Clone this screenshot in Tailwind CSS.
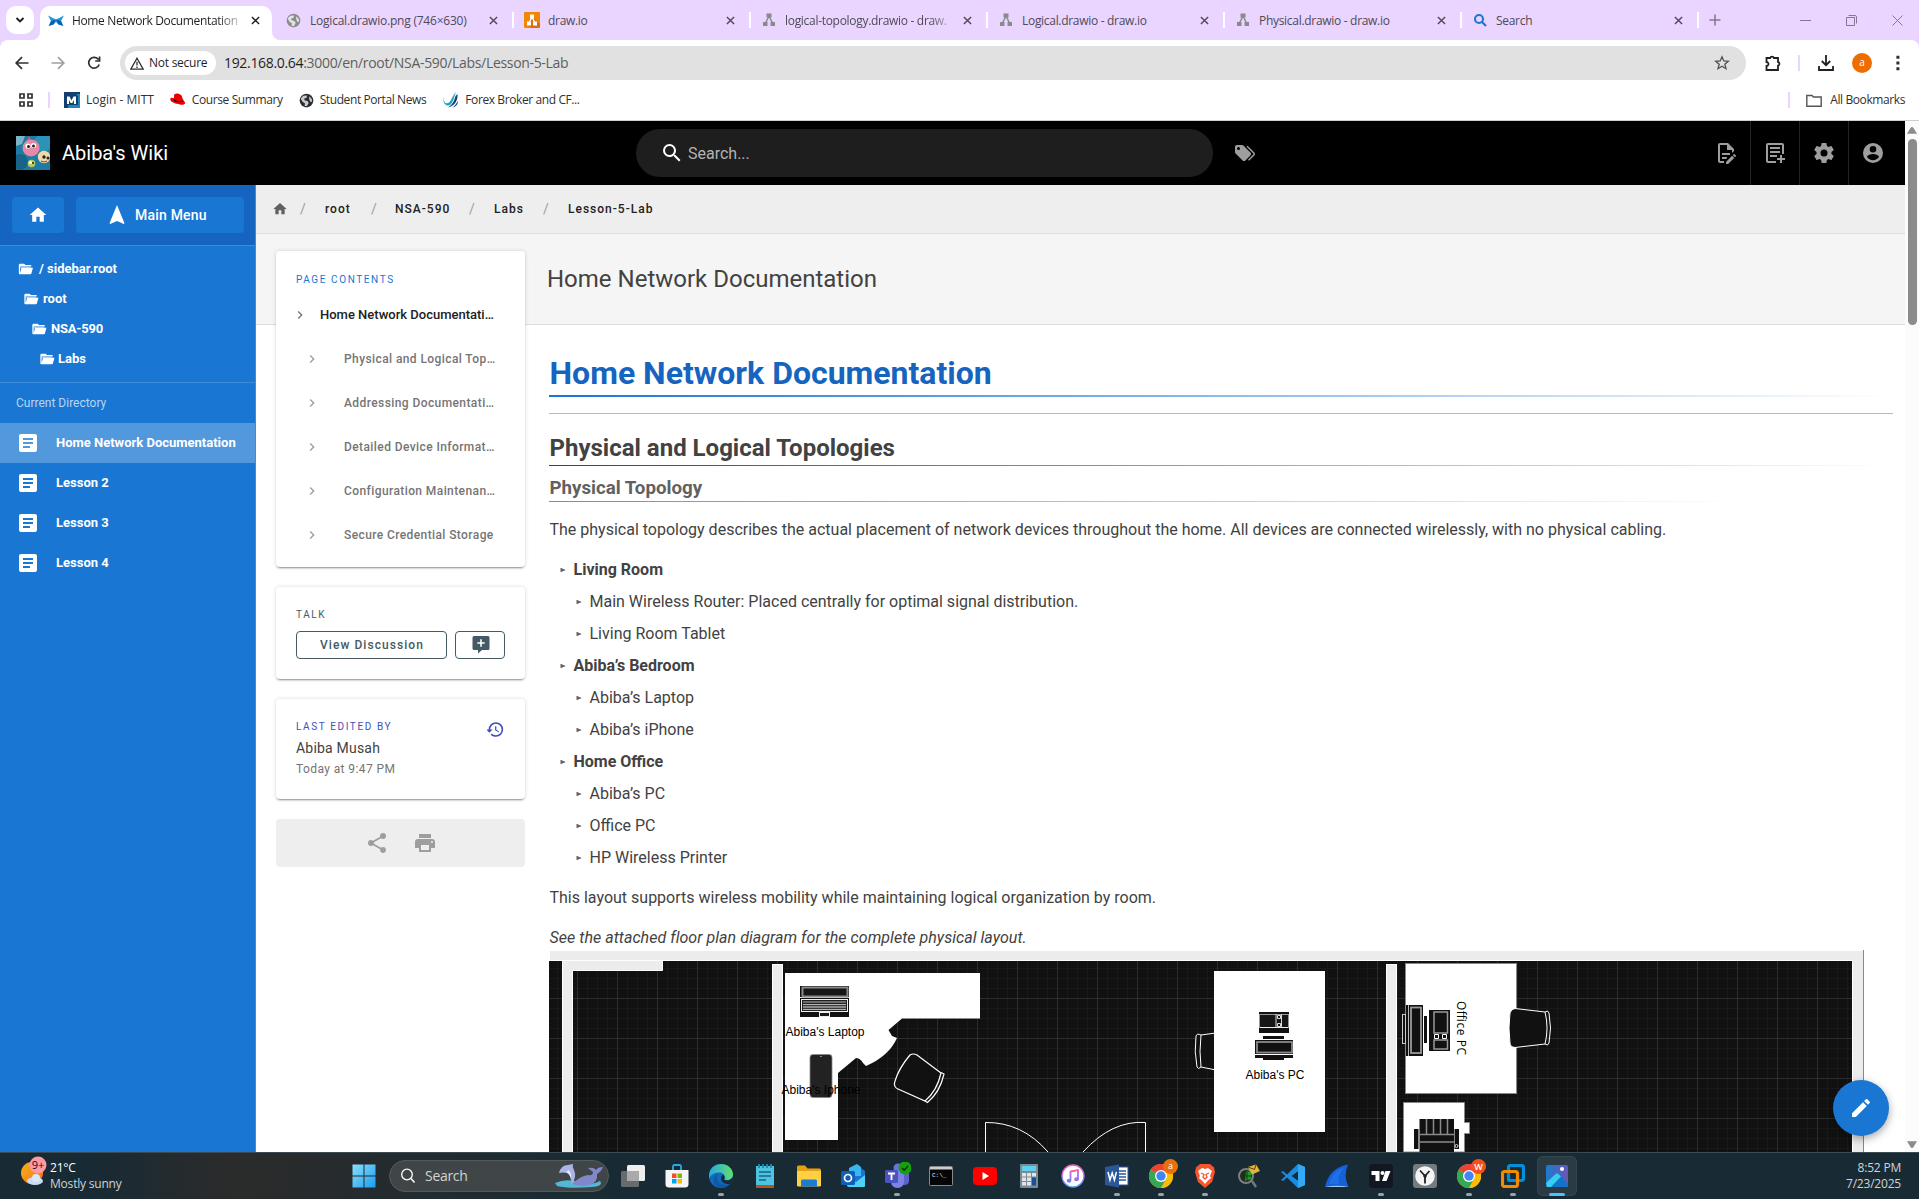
<!DOCTYPE html>
<html lang="en">
<head>
<meta charset="utf-8">
<title>Home Network Documentation | Abiba's Wiki</title>
<script src="https://cdn.jsdelivr.net/npm/@tailwindcss/browser@4"></script>
</head>
<body class="w-[1919px] h-[1199px] overflow-hidden bg-white font-['Roboto',sans-serif] flex flex-col">

<svg class="hidden">
  <symbol id="x" viewBox="0 0 10 10"><path d="M1 1L9 9M9 1L1 9" stroke="currentColor" stroke-width="1.6" fill="none"/></symbol>
  <symbol id="globe" viewBox="0 0 24 24"><circle cx="12" cy="12" r="11" fill="currentColor"/><path d="M3 8.500L7 4.500L13 4L12 7.500L8 9L9 11.500L14 13L15.500 16L12.500 21L9 20.500L9.500 16.500L6 14.500L3.500 10.500ZM16 5L20.500 9.500L21 14L18 14L16.500 10.500Z" fill="#fff" fill-opacity=".75"/></symbol>
  <symbol id="drawio" viewBox="0 0 16 16"><path d="M8 4L4 12M8 4L12 12" stroke="currentColor" stroke-width="1.5"/><path d="M5.500 1.500h5v4h-5zM2 10h4.500v4H2zM9.500 10H14v4H9.500z" fill="currentColor"/></symbol>
  <symbol id="folder-open" viewBox="0 0 24 24"><path fill="currentColor" fill-opacity=".55" d="M4 8h16v3H4z"/><path fill="currentColor" d="M19,20H4C2.890,20 2,19.100 2,18V6C2,4.890 2.890,4 4,4H10L12,6H19A2,2 0 0,1 21,8H4V18L6.140,10H23.210L20.930,18.500C20.700,19.370 19.920,20 19,20Z"/></symbol>
  <symbol id="doc" viewBox="0 0 24 24"><path fill="currentColor" d="M14,17H7V15H14M17,13H7V11H17M17,9H7V7H17M19,3H5C3.890,3 3,3.890 3,5V19A2,2 0 0,0 5,21H19A2,2 0 0,0 21,19V5C21,3.890 20.100,3 19,3Z"/></symbol>
  <symbol id="chev" viewBox="0 0 24 24"><path fill="currentColor" d="M8.590,16.580L13.170,12L8.590,7.410L10,6L16,12L10,18L8.590,16.580Z"/></symbol>
  <symbol id="home" viewBox="0 0 24 24"><path fill="currentColor" d="M10,20V14H14V20H19V12H22L12,3L2,12H5V20H10Z"/></symbol>
  <symbol id="chrome" viewBox="0 0 24 24"><circle cx="12" cy="12" r="12" fill="#fbbc05"/><path d="M12 12L1.600 6A12 12 0 0 1 22.400 6Z" fill="#ea4335"/><path d="M12 0A12 12 0 0 1 22.400 6H12Z" fill="#ea4335"/><path d="M1.600 6A12 12 0 0 0 12 24L17.200 15L12 12Z" fill="#34a853"/><path d="M22.400 6A12 12 0 0 1 12 24L17.200 15A6 6 0 0 0 17 8V6Z" fill="#fbbc05"/><circle cx="12" cy="12" r="6" fill="#fff"/><circle cx="12" cy="12" r="4.700" fill="#4285f4"/></symbol>
  <symbol id="li" viewBox="0 0 6 6"><path d="M.500 .700L5.800 3L.500 5.300Z" fill="#616161"/></symbol>
</svg>

<!-- Browser tabs -->
<header class="h-[121px] shrink-0 bg-[#e9d5ff] font-['Open_Sans',sans-serif] text-xs flex flex-col">
  <div class="h-10 flex shrink-0 tracking-[-0.3px] text-[#4f4a57]">
    <div class="w-10 shrink-0 pl-1.5 pt-1.5"><div class="w-7 h-7 rounded-[10px] bg-white grid place-items-center"><svg class="w-[10px] h-[8px]" viewBox="0 0 10 8"><path d="M1.500 2L5 5.500L8.500 2" fill="none" stroke="#1f1f1f" stroke-width="1.900"/></svg></div></div>
    <div class="w-[237px] shrink-0 pt-1.5 relative">
      <div class="w-[232px] h-[34px] bg-white rounded-t-[10px] flex items-center pb-[5px] pl-2 text-[#1f1f1f]">
        <svg class="w-4 h-4 shrink-0" viewBox="0 0 16 16"><path d="M0 2.500L8 6.500L16 2.500L13 8L15.500 13L10.500 11.500L8 9L5.500 11.500L.500 13L3 8Z" fill="#1e9be0"/><path d="M3 8L8 6.500L5.500 11.500L1 12.800ZM13 8L8 6.500L10.500 11.500L15 12.800Z" fill="#0b5fb0"/></svg>
        <span class="ml-2 w-[168px] whitespace-nowrap tracking-[-0.36px] [mask-image:linear-gradient(to_right,black_145px,transparent_175px)]">Home Network Documentation</span>
        <svg class="w-[9px] h-[9px] ml-[11px]"><use href="#x"/></svg>
      </div>
      <svg class="absolute -left-2 bottom-0 w-2 h-2" viewBox="0 0 8 8"><path d="M8 0V8H0A8 8 0 0 0 8 0Z" fill="#fff"/></svg>
      <svg class="absolute left-[232px] bottom-0 w-2 h-2" viewBox="0 0 8 8"><path d="M0 0V8H8A8 8 0 0 1 0 0Z" fill="#fff"/></svg>
    </div>
    <div class="w-[237px] shrink-0 flex items-center pl-[9px]"><svg class="w-[15px] h-[15px] text-[#8c8c8c] shrink-0"><use href="#globe"/></svg><span class="ml-[9px] w-[171px] pt-px whitespace-nowrap tracking-[-0.22px]">Logical.drawio.png (746×630)</span><svg class="w-[9px] h-[9px] ml-[8px]"><use href="#x"/></svg><i class="w-[2px] h-4 bg-white ml-[14px]"></i></div>
    <div class="w-[237px] shrink-0 flex items-center pl-[10px]"><svg class="w-4 h-4 shrink-0" viewBox="0 0 16 16"><rect width="16" height="16" rx="1" fill="#f08705"/><path d="M9 5L16 12V15L15 16H7L3 13Z" fill="#df6c0c"/><path d="M8 5L5 11M8 5L11 11" stroke="#fff" stroke-width="1.400"/><path d="M6 2.500h4v4H6zM3 9.500h4v4H3zM9 9.500h4v4H9z" fill="#fff"/></svg><span class="ml-[8px] w-[170px] pt-px">draw.io</span><svg class="w-[9px] h-[9px] ml-[8px]"><use href="#x"/></svg><i class="w-[2px] h-4 bg-white ml-[14px]"></i></div>
    <div class="w-[237px] shrink-0 flex items-center pl-[10px]"><svg class="w-4 h-4 shrink-0 text-[#8a8a8a]"><use href="#drawio"/></svg><span class="ml-[8px] w-[170px] pt-px whitespace-nowrap [mask-image:linear-gradient(to_right,black_145px,transparent_172px)]">logical-topology.drawio - draw.</span><svg class="w-[9px] h-[9px] ml-[8px]"><use href="#x"/></svg><i class="w-[2px] h-4 bg-white ml-[14px]"></i></div>
    <div class="w-[237px] shrink-0 flex items-center pl-[10px]"><svg class="w-4 h-4 shrink-0 text-[#8a8a8a]"><use href="#drawio"/></svg><span class="ml-[8px] w-[170px] pt-px">Logical.drawio - draw.io</span><svg class="w-[9px] h-[9px] ml-[8px]"><use href="#x"/></svg><i class="w-[2px] h-4 bg-white ml-[14px]"></i></div>
    <div class="w-[237px] shrink-0 flex items-center pl-[10px]"><svg class="w-4 h-4 shrink-0 text-[#8a8a8a]"><use href="#drawio"/></svg><span class="ml-[8px] w-[170px] pt-px">Physical.drawio - draw.io</span><svg class="w-[9px] h-[9px] ml-[8px]"><use href="#x"/></svg><i class="w-[2px] h-4 bg-white ml-[14px]"></i></div>
    <div class="w-[237px] shrink-0 flex items-center pl-[10px]"><svg class="w-4 h-4 shrink-0" viewBox="0 0 16 16"><circle cx="7" cy="7" r="4" fill="none" stroke="#1976d2" stroke-width="2"/><path d="M10 10L14 14" stroke="#1976d2" stroke-width="2.200"/></svg><span class="ml-[8px] w-[170px] pt-px">Search</span><svg class="w-[9px] h-[9px] ml-[8px]"><use href="#x"/></svg><i class="w-[2px] h-4 bg-white ml-[14px]"></i></div>
    <svg class="w-3 h-3 mt-[14px] ml-[10px]" viewBox="0 0 12 12"><path d="M6 .500V11.500M.500 6H11.500" stroke="#85798f" stroke-width="1.600"/></svg>
    <div class="ml-auto mr-[16px] flex items-center gap-[35px]">
      <svg class="w-[11px] h-[11px]" viewBox="0 0 11 11"><path d="M0 5.500H11" stroke="#85798f"/></svg>
      <svg class="w-[11px] h-[11px]" viewBox="0 0 11 11"><path d="M.500 2.500H8.500V10.500H.500ZM2.500 .500H9A1.500 1.500 0 0 1 10.500 2V8.500" fill="none" stroke="#85798f"/></svg>
      <svg class="w-[11px] h-[11px]" viewBox="0 0 11 11"><path d="M.500 .500L10.500 10.500M10.500 .500L.500 10.500" stroke="#85798f"/></svg>
    </div>
  </div>
  <!-- Toolbar -->
  <div class="h-[46px] shrink-0 bg-white rounded-t-lg flex items-center pl-[15px]">
    <svg class="w-[14px] h-[14px]" viewBox="0 0 14 14"><path d="M13.500 7H1.500M7 1.200L1.200 7L7 12.800" fill="none" stroke="#303030" stroke-width="1.700"/></svg>
    <svg class="w-[14px] h-[14px] ml-[22px]" viewBox="0 0 14 14"><path d="M.500 7H12.500M7 1.200L12.800 7L7 12.800" fill="none" stroke="#a0a0a0" stroke-width="1.700"/></svg>
    <svg class="w-[14px] h-[14px] ml-[22px]" viewBox="0 0 14 14"><path d="M12.200 8.500A5.400 5.400 0 1 1 11.500 3.600M12.600 .500V5H8.200" fill="none" stroke="#303030" stroke-width="1.700"/></svg>
    <div class="ml-[19px] w-[1626px] h-[34px] rounded-full bg-[#e1e1e1] flex items-center pl-[5px]">
      <div class="w-[91px] h-6 rounded-full bg-white flex items-center pl-[5px] text-[#1f1f1f] font-medium tracking-[-0.25px] whitespace-nowrap">
        <svg class="w-[14px] h-[13px] mr-[5px]" viewBox="0 0 14 13"><path d="M7 1.200L13.200 12.200H.800ZM7 4.800V8.500M7 9.500V11" fill="none" stroke="#303030" stroke-width="1.300"/></svg>Not secure</div>
      <div class="ml-[8px] text-sm tracking-[-0.32px] text-[#5e5e5e]"><span class="text-[#1f1f1f]">192.168.0.64</span>:3000/en/root/NSA-590/Labs/Lesson-5-Lab</div>
      <svg class="ml-auto mr-[16px] w-4 h-4" viewBox="0 0 16 16"><path d="M8 1.800L9.800 6L14.300 6.300L10.800 9.200L12 13.700L8 11.200L4 13.700L5.200 9.200L1.700 6.300L6.200 6Z" fill="none" stroke="#505050" stroke-width="1.300"/></svg>
    </div>
    <svg class="ml-[18px] w-[18px] h-[18px]" viewBox="0 0 18 18"><path d="M2.500 4H6.200A1.900 1.900 0 0 1 9.900 4H14V8A1.900 1.900 0 0 1 14 11.700V16H2.500V12A2 2 0 0 0 2.500 8Z" fill="none" stroke="#202020" stroke-width="1.800"/></svg>
    <i class="ml-[16px] w-[2px] h-4 bg-[#e9d5ff]"></i>
    <svg class="ml-[18px] w-4 h-4" viewBox="0 0 16 16"><path d="M8 0V10M3.800 6L8 10.200L12.200 6M1 11V15H15V11" fill="none" stroke="#202020" stroke-width="1.800"/></svg>
    <div class="ml-[18px] w-5 h-5 rounded-full bg-[#ef6c00] text-white text-[10px] leading-[19px] text-center">a</div>
    <svg class="ml-[24px] w-1 h-4" viewBox="0 0 4 16"><path d="M.400 .800h3v3h-3zM.400 6.500h3v3h-3zM.400 12.200h3v3h-3z" fill="#303030"/></svg>
  </div>
  <!-- Bookmarks -->
  <div class="h-[35px] bg-white border-b border-[#cfcfcf] flex items-center pb-[6px] pl-[19px] text-[#303030] tracking-[-0.4px] whitespace-nowrap">
    <svg class="w-[14px] h-[14px]" viewBox="0 0 14 14"><path d="M1 1h4v4H1zM9 1h4v4H9zM1 9h4v4H1zM9 9h4v4H9z" fill="none" stroke="#303030" stroke-width="1.700"/></svg>
    <i class="ml-[15px] w-[2px] h-4 bg-[#e9d5ff]"></i>
    <svg class="ml-[14px] w-4 h-4" viewBox="0 0 16 16"><rect width="16" height="16" fill="#123f70"/><path d="M12 2H16V16H4V13H14V4Z" fill="#1f86bd"/><path d="M3 12V4.500H5.500L7.500 8.500L9.500 4.500H12V12H10V8L8.300 11H6.700L5 8V12Z" fill="#fff"/></svg><span class="ml-[6px] tracking-normal">Login - MITT</span>
    <svg class="ml-[16px] w-4 h-4" viewBox="0 0 16 16"><path d="M4 4C4 1.500 7 1 9 2C11 2.500 12 3.500 12.500 6.500L14 9C17 12 13 13.500 10 12.500C5 11.500 0 10 .300 7C.500 5 3 6 4 6.500Z" fill="#e00"/><path d="M3.500 6.500C5 9 10 10 12.500 8.500L12.800 9.600C10 11 5 10 3.200 8Z" fill="#111"/></svg><span class="ml-[6px]">Course Summary</span>
    <svg class="ml-[16px] w-[15px] h-[15px] text-[#2b2f33]"><use href="#globe"/></svg><span class="ml-[6px]">Student Portal News</span>
    <svg class="ml-[17px] w-4 h-4" viewBox="0 0 16 16"><path d="M1 4C0 9 2 12 5 11C8 10 9 4 13 0C11 4 11 10 7 13C3 15 -1 11 1 4Z" fill="#19a9c4"/><path d="M14.500 2C15 8 12 14 5 15.500C10 12.500 11.500 8 12.500 4ZM15 9C15 13 12 15 9.500 15.700C12 14 13 12 15 9Z" fill="#153f7a"/></svg><span class="ml-[6px]">Forex Broker and CF...</span>
    <i class="ml-auto w-[2px] h-4 bg-[#e9d5ff]"></i>
    <svg class="ml-[16px] w-4 h-[13px]" viewBox="0 0 16 13"><path d="M.800 1.500H6L7.500 3H15.200V12.200H.800Z" fill="none" stroke="#555" stroke-width="1.400"/></svg><span class="ml-[8px] mr-[14px]">All Bookmarks</span>
  </div>
</header>

<!-- Page viewport -->
<div class="h-[1031px] shrink-0 flex">
 <div class="w-[1905px] shrink-0 flex flex-col overflow-hidden">
  <nav class="h-16 shrink-0 bg-black flex items-center text-[#9e9e9e]">
    <svg class="ml-4 w-[34px] h-[34px]" viewBox="0 0 34 34"><rect width="34" height="34" fill="#1d7ba6"/><circle cx="27" cy="7" r="9" fill="#2c93b8"/><circle cx="4" cy="26" r="8" fill="#166588"/><path d="M0 0H9L6 8L0 10Z" fill="#7cb4c6"/><path d="M11 4L13 0L15 4Z" fill="#e8506a"/><circle cx="15" cy="12" r="8.500" fill="#e48aa4"/><circle cx="12" cy="10" r="2.600" fill="#fff"/><circle cx="17.500" cy="9.500" r="2.600" fill="#fff"/><circle cx="12.500" cy="10.500" r="1.500" fill="#222"/><circle cx="17.500" cy="10" r="1.500" fill="#222"/><circle cx="28" cy="21" r="6.200" fill="#f0d9a8"/><circle cx="28" cy="21" r="1.700" fill="#222"/><circle cx="32" cy="22" r="1.500" fill="#222"/><path d="M25 25Q28 27 31 25" stroke="#a33" fill="none"/><circle cx="15.500" cy="27.500" r="3.800" fill="#b6c95c"/><circle cx="14.500" cy="26.500" r="1.500" fill="#fff"/><circle cx="17" cy="27" r="1" fill="#222"/></svg>
    <span class="ml-3 w-[574px] text-xl text-white">Abiba's Wiki</span>
    <div class="w-[577px] h-12 rounded-full bg-[#1e1e1e] flex items-center pl-6">
      <svg class="w-6 h-6 text-white" viewBox="0 0 24 24"><path fill="currentColor" d="M9.500,3A6.500,6.500 0 0,1 16,9.500C16,11.110 15.410,12.590 14.440,13.730L14.710,14H15.500L20.500,19L19,20.500L14,15.500V14.710L13.730,14.440C12.590,15.410 11.110,16 9.500,16A6.500,6.500 0 0,1 3,9.500A6.500,6.500 0 0,1 9.500,3M9.500,5C7,5 5,7 5,9.500C5,12 7,14 9.500,14C12,14 14,12 14,9.500C14,7 12,5 9.500,5Z"/></svg>
      <span class="ml-1 text-base text-[#b3b3b3] pt-px">Search...</span>
    </div>
    <svg class="ml-[20px] w-6 h-6" viewBox="0 0 24 24"><path fill="currentColor" d="M5.500,9A1.500,1.500 0 0,0 7,7.500A1.500,1.500 0 0,0 5.500,6A1.500,1.500 0 0,0 4,7.500A1.500,1.500 0 0,0 5.500,9M17.410,11.580C17.770,11.940 18,12.440 18,13C18,13.550 17.780,14.050 17.410,14.410L12.410,19.410C12.050,19.770 11.550,20 11,20C10.450,20 9.950,19.780 9.580,19.410L2.590,12.420C2.220,12.050 2,11.550 2,11V6C2,4.890 2.890,4 4,4H9C9.550,4 10.050,4.220 10.410,4.580L17.410,11.580M13.540,5.710L14.540,4.710L21.410,11.580C21.780,11.940 22,12.450 22,13C22,13.550 21.780,14.050 21.420,14.410L16.040,19.790L15.040,18.790L20.750,13L13.540,5.710Z"/></svg>
    <div class="ml-auto flex h-full">
      <div class="w-12 grid place-items-center"><svg class="w-6 h-6" viewBox="0 0 24 24"><path fill="currentColor" d="M8,12H16V14H8V12M10,20H6V4H13V9H18V12.100L20,10.100V8L14,2H6A2,2 0 0,0 4,4V20A2,2 0 0,0 6,22H10V20M8,18H12.100L13,17.100V16H8V18M20.200,13C20.300,13 20.500,13.100 20.600,13.200L21.900,14.500C22.100,14.700 22.100,15.100 21.900,15.300L20.900,16.300L18.800,14.200L19.800,13.200C19.900,13.100 20,13 20.200,13M20.200,16.900L14.100,23H12V20.900L18.100,14.800L20.200,16.900Z"/></svg></div>
      <div class="w-[49px] grid place-items-center border-l border-[#242424]"><svg class="w-6 h-6" viewBox="0 0 24 24"><path fill="currentColor" d="M5 2H19A2 2 0 0 1 21 4V13H19V4H5V20H13V22H5A2 2 0 0 1 3 20V4A2 2 0 0 1 5 2ZM7 6H17V8H7ZM7 10H17V12H7ZM7 14H14V16H7ZM17 14H19V17H22V19H19V22H17V19H14V17H17Z"/></svg></div>
      <div class="w-[49px] grid place-items-center border-l border-[#242424]"><svg class="w-6 h-6" viewBox="0 0 24 24"><path fill="currentColor" d="M12,15.500A3.500,3.500 0 0,1 8.500,12A3.500,3.500 0 0,1 12,8.500A3.500,3.500 0 0,1 15.500,12A3.500,3.500 0 0,1 12,15.500M19.430,12.970C19.470,12.650 19.500,12.330 19.500,12C19.500,11.670 19.470,11.340 19.430,11L21.540,9.370C21.730,9.220 21.780,8.950 21.660,8.730L19.660,5.270C19.540,5.050 19.270,4.960 19.050,5.050L16.560,6.050C16.040,5.660 15.500,5.320 14.870,5.070L14.500,2.420C14.460,2.180 14.250,2 14,2H10C9.750,2 9.540,2.180 9.500,2.420L9.130,5.070C8.500,5.320 7.960,5.660 7.440,6.050L4.950,5.050C4.730,4.960 4.460,5.050 4.340,5.270L2.340,8.730C2.210,8.950 2.270,9.220 2.460,9.370L4.570,11C4.530,11.340 4.500,11.670 4.500,12C4.500,12.330 4.530,12.650 4.570,12.970L2.460,14.630C2.270,14.780 2.210,15.050 2.340,15.270L4.340,18.730C4.460,18.950 4.730,19.030 4.950,18.950L7.440,17.940C7.960,18.340 8.500,18.680 9.130,18.930L9.500,21.580C9.540,21.820 9.750,22 10,22H14C14.250,22 14.460,21.820 14.500,21.580L14.870,18.930C15.500,18.670 16.040,18.340 16.560,17.940L19.050,18.950C19.270,19.030 19.540,18.950 19.660,18.730L21.660,15.270C21.780,15.050 21.730,14.780 21.540,14.630L19.430,12.970Z"/></svg></div>
      <div class="w-[57px] pr-2 grid place-items-center border-l border-[#242424]"><svg class="w-6 h-6" viewBox="0 0 24 24"><path fill="currentColor" fill-rule="evenodd" d="M12 2A10 10 0 1 0 12 22A10 10 0 1 0 12 2ZM12 5A3.300 3.300 0 1 1 12 11.600A3.300 3.300 0 1 1 12 5ZM12 19.200C9.500 19.200 7.290 17.920 6 16C6.030 14 10 12.900 12 12.900C14 12.900 17.970 14 18 16C16.710 17.920 14.500 19.200 12 19.200Z"/></svg></div>
    </div>
  </nav>

  <div class="flex flex-1 min-h-0">
   <!-- Sidebar -->
   <aside class="w-64 shrink-0 bg-[#1976d2] text-white flex flex-col border-r border-[#3d8bd9]">
    <div class="h-[61px] shrink-0 bg-[#1565c0] border-b border-[#3d8bd9] pt-3 pl-3 flex">
      <div class="w-[52px] h-9 rounded bg-[#1976d2] grid place-items-center"><svg class="w-5 h-5"><use href="#home"/></svg></div>
      <div class="ml-3 w-[168px] h-9 rounded bg-[#1976d2] flex items-center pb-px pl-[29px] text-sm font-medium tracking-[0.2px] whitespace-nowrap"><svg class="w-6 h-6 mr-[6px]" viewBox="0 0 24 24"><path fill="currentColor" d="M12,2L4.500,20.290L5.210,21L12,18L18.790,21L19.500,20.290L12,2Z"/></svg>Main Menu</div>
    </div>
    <div class="h-[137px] shrink-0 border-b border-[#3d8bd9] pt-[8px] text-[13px] font-bold flex flex-col">
      <div class="h-[30px] flex items-center pl-[17px] gap-[5px]"><svg class="w-[17px] h-4"><use href="#folder-open"/></svg>/ sidebar.root</div>
      <div class="h-[30px] flex items-center pl-[23px] gap-[4px]"><svg class="w-4 h-4"><use href="#folder-open"/></svg>root</div>
      <div class="h-[30px] flex items-center pl-[31px] gap-[4px] tracking-[-0.2px]"><svg class="w-4 h-4"><use href="#folder-open"/></svg>NSA-590</div>
      <div class="h-[30px] flex items-center pl-[39px] gap-[3px]"><svg class="w-4 h-4"><use href="#folder-open"/></svg>Labs</div>
    </div>
    <div class="h-10 flex items-center pl-4 text-xs text-white/70">Current Directory</div>
    <div class="text-[13px] font-bold flex flex-col">
      <div class="h-10 flex items-center pl-4 bg-white/25"><svg class="w-6 h-6 mr-4"><use href="#doc"/></svg>Home Network Documentation</div>
      <div class="h-10 flex items-center pl-4"><svg class="w-6 h-6 mr-4"><use href="#doc"/></svg>Lesson 2</div>
      <div class="h-10 flex items-center pl-4"><svg class="w-6 h-6 mr-4"><use href="#doc"/></svg>Lesson 3</div>
      <div class="h-10 flex items-center pl-4"><svg class="w-6 h-6 mr-4"><use href="#doc"/></svg>Lesson 4</div>
    </div>
   </aside>

   <main class="flex-1 min-w-0 flex flex-col">
    <div class="h-[49px] shrink-0 bg-[#eee] border-b border-[#dedede] flex items-center pl-[16px] text-xs font-medium tracking-[1px] text-[#212121]">
      <svg class="w-[16px] h-[16px] text-[#616161]"><use href="#home"/></svg>
      <span class="w-[22px] ml-[12px] font-normal text-[14px] text-[#9e9e9e]">/</span><span class="ml-[3px] w-[45px]">root</span>
      <span class="w-[22px] ml-px font-normal text-[14px] text-[#9e9e9e]">/</span><span class="ml-[2px] w-[74px]">NSA-590</span>
      <span class="w-[22px] font-normal text-[14px] text-[#9e9e9e]">/</span><span class="ml-[3px] w-[49px]">Labs</span>
      <span class="w-[22px] font-normal text-[14px] text-[#9e9e9e]">/</span><span class="ml-[3px]">Lesson-5-Lab</span>
    </div>
    <div class="h-[91px] shrink-0 bg-[#f5f5f5] border-b border-[#dedede] flex items-center pl-[291px] text-2xl text-[#424242]">Home Network Documentation</div>
    <div class="flex flex-1 min-h-0">
      <!-- Page info column -->
      <div class="w-[293px] shrink-0 pl-5 -mt-[74px] flex flex-col relative">
        <section class="w-[249px] h-[316px] rounded bg-white shadow-[0_2px_2px_-1px_rgba(0,0,0,0.4),0_0_4px_rgba(0,0,0,0.15)] pl-5 pt-[23px] text-[#757575]">
          <h4 class="text-[10px] leading-3 tracking-[1.6px] text-[#1976d2]">PAGE CONTENTS</h4>
          <div class="h-11 mt-[7px] -ml-[4px] flex items-center text-[13px] font-medium text-[#212121]"><svg class="w-4 h-4 mr-[12px] text-[#757575]"><use href="#chev"/></svg>Home Network Documentati…</div>
          <div class="h-11 ml-2 flex items-center text-xs font-medium tracking-[0.41px]"><svg class="w-4 h-4 mr-6 text-[#9e9e9e]"><use href="#chev"/></svg>Physical and Logical Top…</div>
          <div class="h-11 ml-2 flex items-center text-xs font-medium tracking-[0.41px]"><svg class="w-4 h-4 mr-6 text-[#9e9e9e]"><use href="#chev"/></svg>Addressing Documentati…</div>
          <div class="h-11 ml-2 flex items-center text-xs font-medium tracking-[0.41px]"><svg class="w-4 h-4 mr-6 text-[#9e9e9e]"><use href="#chev"/></svg>Detailed Device Informat…</div>
          <div class="h-11 ml-2 flex items-center text-xs font-medium tracking-[0.41px]"><svg class="w-4 h-4 mr-6 text-[#9e9e9e]"><use href="#chev"/></svg>Configuration Maintenan…</div>
          <div class="h-11 ml-2 flex items-center text-xs font-medium tracking-[0.4px]"><svg class="w-4 h-4 mr-6 text-[#9e9e9e]"><use href="#chev"/></svg>Secure Credential Storage</div>
        </section>
        <section class="mt-5 w-[249px] h-[92px] rounded bg-white shadow-[0_2px_2px_-1px_rgba(0,0,0,0.4),0_0_4px_rgba(0,0,0,0.15)] px-5 pt-[22px] text-[#455a64]">
          <h4 class="text-[10px] leading-3 tracking-[1.6px]">TALK</h4>
          <div class="mt-[10px] flex gap-2">
            <div class="w-[151px] h-7 rounded border border-[#455a64] grid place-items-center pl-px text-xs font-medium tracking-[1.06px]">View Discussion</div>
            <div class="w-[50px] h-7 rounded border border-[#455a64] grid place-items-center pl-px"><svg class="w-5 h-[18px]" viewBox="0 0 20 18"><path fill="#455a64" fill-rule="evenodd" d="M3 0H17A1.500 1.500 0 0 1 18.500 1.500V12.500A1.500 1.500 0 0 1 17 14H11L7 17.500V14H3A1.500 1.500 0 0 1 1.500 12.500V1.500A1.500 1.500 0 0 1 3 0ZM9.200 3.300V6.200H6.300V7.800H9.200V10.700H10.800V7.800H13.700V6.200H10.800V3.300Z"/></svg></div>
          </div>
        </section>
        <section class="mt-5 w-[249px] h-[100px] rounded bg-white shadow-[0_2px_2px_-1px_rgba(0,0,0,0.4),0_0_4px_rgba(0,0,0,0.15)] pl-5 pr-[21px] pt-[22px] flex justify-between">
          <div>
            <h4 class="text-[10px] leading-3 tracking-[1.6px] text-[#3f51b5]">LAST EDITED BY</h4>
            <p class="mt-[6px] text-sm leading-[18px] tracking-[0.2px] text-[#424242]">Abiba Musah</p>
            <p class="mt-[4px] text-xs leading-4 tracking-[0.4px] text-[#757575]">Today at 9:47 PM</p>
          </div>
          <svg class="w-[17px] h-[17px]" viewBox="2 2 21 20"><path fill="#3f51b5" d="M13.500,8H12V13L16.280,15.540L17,14.330L13.500,12.250V8M13,3A9,9 0 0,0 4,12H1L4.960,16.030L9,12H6A7,7 0 0,1 13,5A7,7 0 0,1 20,12A7,7 0 0,1 13,19C11.070,19 9.320,18.210 8.060,16.940L6.640,18.360C8.270,20 10.500,21 13,21A9,9 0 0,0 22,12A9,9 0 0,0 13,3"/></svg>
        </section>
        <section class="mt-5 w-[249px] h-12 rounded bg-[#eee] flex items-center justify-center gap-6 text-[#9e9e9e]">
          <svg class="w-6 h-6" viewBox="0 0 24 24"><path fill="currentColor" d="M18,16.080C17.240,16.080 16.560,16.380 16.040,16.850L8.910,12.700C8.960,12.470 9,12.240 9,12C9,11.760 8.960,11.530 8.910,11.300L15.960,7.190C16.500,7.690 17.210,8 18,8A3,3 0 0,0 21,5A3,3 0 0,0 18,2A3,3 0 0,0 15,5C15,5.240 15.040,5.470 15.090,5.700L8.040,9.810C7.500,9.310 6.790,9 6,9A3,3 0 0,0 3,12A3,3 0 0,0 6,15C6.790,15 7.500,14.690 8.040,14.190L15.160,18.340C15.110,18.550 15.080,18.770 15.080,19C15.080,20.610 16.390,21.910 18,21.910C19.610,21.910 20.920,20.610 20.920,19A2.920,2.920 0 0,0 18,16.080Z"/></svg>
          <svg class="w-6 h-6" viewBox="0 0 24 24"><path fill="currentColor" d="M18,3H6V7H18M19,12A1,1 0 0,1 18,11A1,1 0 0,1 19,10A1,1 0 0,1 20,11A1,1 0 0,1 19,12M16,19H8V14H16M19,8H5A3,3 0 0,0 2,11V17H6V21H18V17H22V11A3,3 0 0,0 19,8Z"/></svg>
        </section>
      </div>

      <!-- Article -->
      <article class="w-[1344px] shrink-0 flex flex-col text-base text-[#424242]">
        <h1 class="h-[72px] shrink-0 flex flex-col justify-end text-[32px] leading-8 font-bold text-[#1565c0]"><span class="pl-[0.5px]">Home Network Documentation</span><i class="mt-[6px] h-[2px] bg-linear-to-r from-[#1976d2] to-transparent"></i></h1>
        <div class="mt-4 h-px shrink-0 bg-[#b8b8b8]"></div>
        <h2 class="h-[52px] shrink-0 flex flex-col justify-end text-2xl leading-6 font-bold text-[#424242]"><span class="pl-[0.5px]">Physical and Logical Topologies</span><i class="mt-[5px] h-px bg-linear-to-r from-[#424242] to-transparent"></i></h2>
        <h3 class="h-9 shrink-0 flex flex-col justify-end text-[18.72px] leading-6 font-bold text-[#616161]"><span class="pl-[0.5px]">Physical Topology</span><i class="mt-px h-px bg-linear-to-r from-[#8a8a8a] to-[#8a8a8a]/0 w-[1200px]"></i></h3>
        <p class="mt-4 h-6 shrink-0 leading-6 pl-[0.5px]">The physical topology describes the actual placement of network devices throughout the home. All devices are connected wirelessly, with no physical cabling.</p>
        <ul class="mt-3 leading-8 flex flex-col shrink-0 pl-[0.5px]">
          <li class="h-8 pl-[10px] flex items-center gap-2 font-bold"><svg class="w-[6px] h-[6px]"><use href="#li"/></svg>Living Room</li>
          <li class="h-8 pl-[26px] flex items-center gap-2"><svg class="w-[6px] h-[6px]"><use href="#li"/></svg>Main Wireless Router: Placed centrally for optimal signal distribution.</li>
          <li class="h-8 pl-[26px] flex items-center gap-2"><svg class="w-[6px] h-[6px]"><use href="#li"/></svg>Living Room Tablet</li>
          <li class="h-8 pl-[10px] flex items-center gap-2 font-bold"><svg class="w-[6px] h-[6px]"><use href="#li"/></svg>Abiba’s Bedroom</li>
          <li class="h-8 pl-[26px] flex items-center gap-2"><svg class="w-[6px] h-[6px]"><use href="#li"/></svg>Abiba’s Laptop</li>
          <li class="h-8 pl-[26px] flex items-center gap-2"><svg class="w-[6px] h-[6px]"><use href="#li"/></svg>Abiba’s iPhone</li>
          <li class="h-8 pl-[10px] flex items-center gap-2 font-bold"><svg class="w-[6px] h-[6px]"><use href="#li"/></svg>Home Office</li>
          <li class="h-8 pl-[26px] flex items-center gap-2"><svg class="w-[6px] h-[6px]"><use href="#li"/></svg>Abiba’s PC</li>
          <li class="h-8 pl-[26px] flex items-center gap-2"><svg class="w-[6px] h-[6px]"><use href="#li"/></svg>Office PC</li>
          <li class="h-8 pl-[26px] flex items-center gap-2"><svg class="w-[6px] h-[6px]"><use href="#li"/></svg>HP Wireless Printer</li>
        </ul>
        <p class="mt-3 h-6 shrink-0 leading-6 pl-[0.5px]">This layout supports wireless mobility while maintaining logical organization by room.</p>
        <p class="mt-4 h-6 shrink-0 leading-6 pl-[0.5px] italic tracking-[0.04px]">See the attached floor plan diagram for the complete physical layout.</p>
        <!-- Floor plan -->
        <svg class="w-[1316px] h-[202px] shrink-0" viewBox="549 950 1316 202" font-family="Liberation Sans, sans-serif" font-size="12">
          <defs>
            <pattern id="minor" x="547" y="948" width="10" height="10" patternUnits="userSpaceOnUse"><path d="M.500 0V10M0 .500H10" stroke="#191919"/></pattern>
            <pattern id="major" x="577" y="958" width="40" height="40" patternUnits="userSpaceOnUse"><path d="M.500 0V40M0 .500H40" stroke="#2d2d2d"/></pattern>
          </defs>
          <rect x="549" y="961" width="1304" height="191" fill="#111"/>
          <rect x="549" y="961" width="1304" height="191" fill="url(#minor)"/>
          <rect x="549" y="961" width="1304" height="191" fill="url(#major)"/>
          <rect x="550" y="951" width="1313" height="9" fill="#ececec"/><rect x="550" y="960" width="1303" height="1" fill="#fff"/>
          <rect x="1852" y="960" width="11" height="192" fill="#ececec"/><rect x="1852" y="961" width="1" height="191" fill="#fff"/>
          <rect x="1863" y="950" width="1" height="202" fill="#888"/>
          <path d="M562.500 961V1152H572.500V970.500H662.500V961Z" fill="#ececec"/><path d="M562.500 961V1152M572.500 1152V970.500H662.500V961" stroke="#fff" fill="none"/>
          <rect x="772.500" y="964.500" width="10" height="190" fill="#ececec" stroke="#fff"/>
          <rect x="1386.500" y="964.500" width="10" height="190" fill="#ececec" stroke="#fff"/>
          <!-- bedroom desk -->
          <path d="M785 973H980V1018.500H902L888.500 1030L892 1036L897 1038Q889 1056 866 1066L863 1063Q860 1058 856 1058L838 1073V1140H785Z" fill="#fff"/>
          <g><path d="M800 986H849V1017H800Z" fill="#111"/><path d="M800 997.500H849" stroke="#eee"/><rect x="802.500" y="987.500" width="45" height="9" fill="#161616" stroke="#8a8a8a" stroke-width="2"/><rect x="801.500" y="999.500" width="46" height="12" fill="#222" stroke="#eee"/><path d="M803 1002H846M803 1004.500H846M803 1009.500H846" stroke="#b5b5b5"/><path d="M803 1007H846" stroke="#888" stroke-width="2.500"/><rect x="819.500" y="1012.500" width="10" height="4" fill="#161616" stroke="#eee"/></g>
          <text x="825" y="1036" text-anchor="middle">Abiba's Laptop</text>
          <rect x="810" y="1054.500" width="22" height="43" rx="3" fill="#222" stroke="#888" stroke-width=".8"/><path d="M820 1056.500H822" stroke="#888"/>
          <text x="821" y="1094" text-anchor="middle">Abiba's Iphone</text>
          <path d="M910 1055Q913 1053 917 1055L941 1073Q937 1091 925 1101L898 1089Q893 1087 895 1081Q899 1068 910 1055Z" fill="#111" stroke="#fff" stroke-width="1.200"/><path d="M941 1072.500L944 1074Q940 1092 927.500 1102.500L925 1101" fill="none" stroke="#fff" stroke-width="1.200"/>
          <path d="M985.500 1152V1122.500Q1022 1122 1048 1152M1145.500 1152V1122.500Q1112 1120 1083 1152" fill="none" stroke="#fff"/>
          <!-- home office -->
          <path d="M1216 1033L1201 1035Q1199 1052 1201 1067L1216 1070M1201 1035Q1197 1033 1196 1036Q1194 1052 1197 1067Q1198 1070 1201 1067" fill="#111" stroke="#fff"/>
          <rect x="1214" y="971" width="111" height="161" fill="#fff"/>
          <g><rect x="1259" y="1012" width="30" height="21" fill="#111"/><rect x="1259.500" y="1014.500" width="29" height="13" fill="#161616" stroke="#999"/><path d="M1276 1014V1028M1281.500 1014V1028" stroke="#ddd"/><path d="M1277.500 1015.500h3v3h-3zM1277.500 1023.500h3v3h-3z" fill="#111" stroke="#ddd"/><path d="M1260 1027.500H1288" stroke="#eee"/><path d="M1263 1036H1284V1039H1263ZM1255 1040H1293V1058H1255ZM1263 1058H1284V1060H1263Z" fill="#111"/><rect x="1257" y="1042" width="35" height="10.500" fill="#111" stroke="#8a8a8a" stroke-width="1.800"/><path d="M1255 1054.500H1293" stroke="#fff"/></g>
          <text x="1275" y="1079" text-anchor="middle">Abiba's PC</text>
          <rect x="1405.500" y="963.500" width="111" height="130" fill="#fff" stroke="#888"/>
          <g><rect x="1402.500" y="1014.500" width="3" height="29" fill="#111" stroke="#ccc"/><path d="M1406 1005H1423V1056H1406ZM1424 1016H1427V1043H1424Z" fill="#111"/><path d="M1408.500 1005V1056" stroke="#bbb"/><rect x="1411" y="1007.500" width="10" height="45.500" fill="#111" stroke="#999" stroke-width="1.800"/><rect x="1429" y="1010" width="21" height="41" fill="#111"/><rect x="1434" y="1012" width="13.500" height="21" fill="#111" stroke="#999" stroke-width="1.500"/><rect x="1434" y="1040" width="13.500" height="9" fill="#111" stroke="#999" stroke-width="1.500"/><path d="M1434.500 1034.500h4v4h-4zM1442.500 1034.500h4v4h-4z" fill="#111" stroke="#fff"/></g>
          <text transform="translate(1457 1001) rotate(90)" font-family="Open Sans, sans-serif" font-size="12" textLength="54">Office PC</text>
          <path d="M1515 1008.500L1545 1012Q1549 1028 1545 1044L1515 1047.500Q1510 1047 1510 1043Q1508 1028 1510 1013Q1511 1009 1515 1008.500Z" fill="#111" stroke="#fff"/><path d="M1545 1012Q1548 1009.500 1549 1013Q1552 1028 1549 1043Q1548 1046.500 1545 1044" fill="none" stroke="#fff"/>
          <path d="M1403.500 1152V1102.500H1464.500V1122.500H1469.500V1133.500H1464.500V1152Z" fill="#fff" stroke="#888"/>
          <g><path d="M1419.500 1119H1454V1152H1419.500ZM1414 1129H1418.500V1149H1414ZM1454.500 1129H1459V1149H1454.500Z" fill="#111"/><path d="M1426.500 1119V1134M1433.500 1119V1134M1440.500 1119V1134M1447.500 1119V1134M1420 1134.500H1454M1420 1142H1454" stroke="#8a8a8a" stroke-width="1.500"/><circle cx="1456.500" cy="1146" r="1.500" fill="#111" stroke="#ddd"/></g>
        </svg>
      </article>
    </div>
   </main>
  </div>
 </div>
 <!-- Scrollbar -->
 <div class="w-[14px] bg-[#fbfbfb] flex flex-col items-center">
   <svg class="mt-[6px] w-[10px] h-[7px]" viewBox="0 0 10 7"><path d="M5 0Q5.800 0 6.500 1L10 6.800H0L3.500 1Q4.200 0 5 0Z" fill="#8b8b8b"/></svg>
   <div class="mt-[5px] w-[9px] h-[186px] rounded-full bg-[#8b8b8b]"></div>
   <svg class="mt-auto mb-[4px] w-[10px] h-[7px]" viewBox="0 0 10 7"><path d="M0 .200H10L6.500 6Q5 8 3.500 6Z" fill="#8b8b8b"/></svg>
 </div>
</div>

<!-- Edit button floating above the page -->
<div class="absolute left-[1833px] top-[1080px] w-14 h-14 rounded-full bg-[#1976d2] grid place-items-center shadow-[0_3px_8px_rgba(0,0,0,0.35)]"><svg class="w-6 h-6" viewBox="0 0 24 24"><path fill="#fff" d="M20.710,7.040C21.100,6.650 21.100,6 20.710,5.630L18.370,3.290C18,2.900 17.350,2.900 16.960,3.290L15.120,5.120L18.870,8.870M3,17.250V21H6.750L17.810,9.930L14.060,6.180L3,17.250Z"/></svg></div>

<!-- Taskbar -->
<footer class="h-[47px] shrink-0 border-t border-[#3c4a52] bg-linear-to-r from-[#182a33] from-[5%] via-[#2b2b2b] via-[12%] to-[#182b34] to-[32%] font-['Open_Sans',sans-serif] text-xs text-[#d0d4d6] flex items-center">
  <div class="w-[342px] flex items-center pl-[20px]">
    <svg class="w-[27px] h-[32px] -mt-2" viewBox="0 0 27 32"><defs><linearGradient id="sun" x1="0" y1="0" x2="1" y2="1"><stop stop-color="#f7b21b"/><stop offset="1" stop-color="#f0701a"/></linearGradient></defs><circle cx="12" cy="17" r="11" fill="url(#sun)"/><ellipse cx="15" cy="25" rx="8" ry="4" fill="#c9dcf5"/><circle cx="16" cy="22" r="4" fill="#dbe8fa"/><circle cx="18" cy="9" r="8.500" fill="#ff99a4"/><text x="18" y="13" font-size="11" text-anchor="middle" fill="#111">9+</text></svg>
    <div class="ml-[3px] leading-4 tracking-[-0.2px]"><div class="text-white">21°C</div><div>Mostly sunny</div></div>
  </div>
  <div class="w-11 grid place-items-center shrink-0"><svg class="w-6 h-6" viewBox="0 0 24 24"><defs><linearGradient id="win" x1="0" y1="0" x2="1" y2="1"><stop stop-color="#8be0fb"/><stop offset="1" stop-color="#1a9cf0"/></linearGradient></defs><path d="M.500 .500H11.500V11.500H.500ZM12.500 .500H23.500V11.500H12.500ZM.500 12.500H11.500V23.500H.500ZM12.500 12.500H23.500V23.500H12.500Z" fill="url(#win)"/></svg></div>
  <div class="ml-[3px] w-[220px] h-8 shrink-0 rounded-full bg-[#404648] border border-[#535a5d] flex items-center pl-[10px] text-sm tracking-[-0.3px]">
    <svg class="w-4 h-4 mr-[9px]" viewBox="0 0 16 16"><circle cx="7" cy="6.500" r="5.300" fill="none" stroke="#fff" stroke-width="1.300"/><path d="M11 10.500L14.500 14.500" stroke="#fff" stroke-width="1.500"/></svg>Search
    <svg class="ml-auto mr-1 w-[50px] h-6" viewBox="0 0 50 24"><path d="M1 19Q12 14 25 18T46 17Q50 22 38 23Q15 25 3 22Z" fill="#4fb9d6"/><path d="M5 9Q7 1 14 1L19 0Q18 3 20 6Q23 13 18 20Q17 11 13 9Q9 8 5 9Z" fill="#a9b4e8"/><path d="M18 20Q26 12 34 11Q39 12 39 8L34 4Q40 3 42 6Q44 3 49 3Q47 8 43 10Q44 18 36 21Q26 23 18 20Z" fill="#8287c9"/><path d="M12 8Q17 10 17 17Q18 10 15 6Z" fill="#e7ebfa"/></svg>
  </div>
  <div class="ml-[2px] flex h-full">
    <div class="w-11 grid place-items-center"><svg class="w-6 h-6" viewBox="0 0 24 24"><rect x="6" y="1" width="18" height="16" rx="1.500" fill="#eee"/><rect x="0" y="7" width="18" height="16" rx="1.500" fill="#777" fill-opacity=".85"/><path d="M6 7H18V17H6Z" fill="#aaa"/></svg></div>
    <div class="w-11 grid place-items-center"><svg class="w-6 h-6" viewBox="0 0 24 24"><path d="M8 6V2.500Q8 1 9.500 1H14.500Q16 1 16 2.500V6" fill="none" stroke="#29a8ea" stroke-width="1.800"/><path d="M.500 6H23.500V20Q23.500 23.500 20 23.500H4Q.500 23.500 .500 20Z" fill="#f5f5f5"/><path d="M7 9.500h4.500V14H7z" fill="#f25022"/><path d="M12.500 9.500H17V14h-4.500z" fill="#7fba00"/><path d="M7 15h4.500v4.500H7z" fill="#00a4ef"/><path d="M12.500 15H17v4.500h-4.500z" fill="#ffb900"/></svg></div>
    <div class="w-11 grid place-items-center relative"><svg class="w-6 h-6" viewBox="0 0 24 24"><defs><linearGradient id="edge" x1="0" y1="0" x2="1" y2="0"><stop stop-color="#27a6e5"/><stop offset="1" stop-color="#5fe06a"/></linearGradient></defs><circle cx="12" cy="12" r="12" fill="#1368bd"/><path d="M0 12C0 4 6 0 12 0C19 0 24 5 24 10.500C24 15 19 17 15.500 15.500C17 13 15 9 11 8.500C6 8 1 11 0 15Z" fill="url(#edge)"/><path d="M8 14C8 19 13 22 20 20.500C17 24 11 24.500 7 22C3 19 4 12 9 9.500C8 11 8 12.500 8 14Z" fill="#0c59a4"/><path d="M14.500 10.500Q16.500 13 15 15.800Q19 18 24 13.500Q23 19 20 20.300Q12 20 12 14Q12.500 11 14.500 10.500Z" fill="#182b34"/></svg><i class="absolute bottom-[3px] w-[6px] h-[3px] rounded-full bg-[#9aa3a8]"></i></div>
    <div class="w-11 grid place-items-center"><svg class="w-5 h-6" viewBox="0 0 20 24"><rect x="1" y="2" width="18" height="20" fill="#4cc3e0"/><rect x="1" y="21" width="18" height="3" fill="#b5541c"/><path d="M4 8H16M4 12H16M4 16H11" stroke="#17667f" stroke-width="1.500"/><path d="M4 0V4M8 0V4M12 0V4M16 0V4" stroke="#1b8dad" stroke-width="1.800"/></svg></div>
    <div class="w-11 grid place-items-center"><svg class="w-6 h-6" viewBox="0 0 24 24"><path d="M0 3Q0 1.500 1.500 1.500H8L10.500 4.500H22.500Q24 4.500 24 6V22H0Z" fill="#e8a013"/><path d="M0 7H24V21Q24 22.500 22.500 22.500H1.500Q0 22.500 0 21Z" fill="#ffd044"/><path d="M4 22.500V17Q4 15.500 5.500 15.500H18.500Q20 15.500 20 17V22.500Z" fill="#1c7dd0"/></svg></div>
    <div class="w-11 grid place-items-center"><svg class="w-6 h-6" viewBox="0 0 24 24"><path d="M6 8L16 1L24 7V22H6Z" fill="#1a75d0"/><path d="M8 4L16 0L20 3V12H8Z" fill="#38b6f1"/><path d="M6 13L15 18L24 11V22Q24 23 23 23H8Q6 23 6 21Z" fill="#4fd0f5"/><rect x="0" y="7" width="14" height="14" rx="1.500" fill="#0f5fb9"/><circle cx="7" cy="14" r="3.500" fill="none" stroke="#fff" stroke-width="1.700"/></svg></div>
    <div class="w-11 grid place-items-center relative"><svg class="w-7 h-7" viewBox="0 0 28 28"><circle cx="15" cy="6" r="4.500" fill="#6b73d8"/><path d="M18 10H26V19Q26 23 21 23H16Z" fill="#5b63c9"/><path d="M8 9H21V19Q21 26 14.500 26T8 19Z" fill="#7b83eb"/><rect x="2" y="8" width="13" height="13" rx="1.500" fill="#4b53bc"/><path d="M5 11.500H12M8.500 11.500V18" stroke="#fff" stroke-width="1.800"/><circle cx="22" cy="6" r="6.500" fill="#13a10e"/><path d="M19 6L21.200 8.200L25 4" fill="none" stroke="#0b2a0b" stroke-width="1.300"/></svg><i class="absolute bottom-[3px] w-[6px] h-[3px] rounded-full bg-[#9aa3a8]"></i></div>
    <div class="w-11 grid place-items-center"><svg class="w-6 h-5" viewBox="0 0 24 20"><rect x=".500" y=".500" width="23" height="19" rx="1" fill="#050505" stroke="#888"/><path d="M1 1H23V3.500H1Z" fill="#ccc"/><text x="3" y="11" font-size="6" fill="#eee" font-family="Liberation Mono, monospace">C:\_</text></svg></div>
    <div class="w-11 grid place-items-center"><svg class="w-6 h-[18px]" viewBox="0 0 24 18"><rect width="24" height="18" rx="4" fill="#f00"/><path d="M9.500 5L16 9L9.500 13Z" fill="#fff"/></svg></div>
    <div class="w-11 grid place-items-center"><svg class="w-5 h-6" viewBox="0 0 20 24"><rect x="1" width="18" height="24" rx="1" fill="#7e8a92"/><rect x="3" y="2" width="14" height="5" fill="#5fd0f0"/><path d="M3 9h4v3.500H3zM8 9h4v3.500H8zM13 9h4v3.500h-4zM3 13.500h4V17H3zM8 13.500h4V17H8zM3 18h4v3.500H3zM8 18h4v3.500H8z" fill="#dfe5e8"/><path d="M13 13.500h4v8h-4z" fill="#12549a"/></svg></div>
    <div class="w-11 grid place-items-center"><svg class="w-6 h-6" viewBox="0 0 24 24"><defs><linearGradient id="itu" x1="0" y1="0" x2="0" y2="1"><stop stop-color="#f560a0"/><stop offset=".5" stop-color="#b26bf0"/><stop offset="1" stop-color="#4aa8f8"/></linearGradient></defs><circle cx="12" cy="12" r="11" fill="#fff" stroke="url(#itu)" stroke-width="1.300"/><path d="M9.500 16.500V7.500L17 6V15" fill="none" stroke="url(#itu)" stroke-width="1.800"/><ellipse cx="8" cy="16.800" rx="2.300" ry="2" fill="#7a7cf4"/><ellipse cx="15.500" cy="15.300" rx="2.300" ry="2" fill="#a66cf0"/></svg></div>
    <div class="w-11 grid place-items-center relative"><svg class="w-6 h-6" viewBox="0 0 24 24"><rect x="10" y="3" width="13" height="18" fill="#fff" stroke="#2b579a"/><path d="M14 7H21M14 10H21M14 13H21M14 16H21" stroke="#2b579a" stroke-width="1.300"/><path d="M0 3L14 .500V23.500L0 21Z" fill="#2b579a"/><path d="M3 8L5 16L7.200 9L9.400 16L11.400 8" fill="none" stroke="#fff" stroke-width="1.500"/></svg><i class="absolute bottom-[3px] w-[6px] h-[3px] rounded-full bg-[#9aa3a8]"></i></div>
    <div class="w-11 grid place-items-center relative"><svg class="w-6 h-6"><use href="#chrome"/></svg><b class="absolute right-[5px] top-[6px] w-[15px] h-[15px] rounded-full bg-[#e8710a] text-white text-[9px] leading-[14px] text-center font-normal">a</b><i class="absolute bottom-[3px] w-[6px] h-[3px] rounded-full bg-[#9aa3a8]"></i></div>
    <div class="w-11 grid place-items-center relative"><svg class="w-5 h-6" viewBox="0 0 20 24"><path d="M5 0H15L19 3.500L20 8L17 18L10 24L3 18L0 8L1 3.500Z" fill="#fb542b"/><path d="M10 5L13 4L17 7L15 12L16 14L12.500 17L10 20L7.500 17L4 14L5 12L3 7L7 4Z" fill="#fff"/><path d="M6 9L9 10.500L8 13L10 15L12 13L11 10.500L14 9" fill="none" stroke="#fb542b" stroke-width="1.300"/></svg><i class="absolute bottom-[3px] w-[6px] h-[3px] rounded-full bg-[#9aa3a8]"></i></div>
    <div class="w-11 grid place-items-center"><svg class="w-6 h-6" viewBox="0 0 24 24"><circle cx="9" cy="12" r="7" fill="#222b1e" stroke="#7b8080" stroke-width="2"/><path d="M15 17L19 23" stroke="#777" stroke-width="2.500"/><path d="M9 7L14 8V15L8 17Z" fill="#1f9b26"/><path d="M10 6V18M5 12H15" stroke="#0b4010"/><path d="M11 3L19 .500L23 7L15 10.500Z" fill="#e5b53c"/><path d="M11 3L17.500 5.500L19 .500" fill="none" stroke="#5a3d08"/></svg></div>
    <div class="w-11 grid place-items-center"><svg class="w-6 h-6" viewBox="0 0 24 24"><path d="M17 0L24 3V21L17 24L6 13.500L2 17L0 16L4.500 12L0 8L2 7L6 10.500ZM17.500 7L10.500 12L17.500 17Z" fill="#1b8be0" fill-rule="evenodd"/><path d="M17 0L24 3V21L17 24Z" fill="#32a9f5"/></svg></div>
    <div class="w-11 grid place-items-center"><svg class="w-6 h-6" viewBox="0 0 24 24"><path d="M0 23Q4 4 23 .500Q18 12 23.500 23Z" fill="#1660d8"/><path d="M4 20Q7 7 19 3.500Q12 12 14 20Z" fill="#1f6fe6"/><path d="M0 23Q12 20.500 23.500 23Z" fill="#9ec4f7"/></svg></div>
    <div class="w-11 grid place-items-center relative"><svg class="w-6 h-6" viewBox="0 0 24 24"><rect width="24" height="24" rx="4" fill="#131722"/><path d="M2.500 7H10.500V17H6.500V11H2.500ZM16.500 7H21.500L17.500 17H13Z" fill="#fff"/><circle cx="13.500" cy="9" r="2" fill="#fff"/></svg><i class="absolute bottom-[3px] w-[6px] h-[3px] rounded-full bg-[#9aa3a8]"></i></div>
    <div class="w-11 grid place-items-center"><svg class="w-6 h-6" viewBox="0 0 24 24"><rect width="24" height="24" rx="3" fill="#747c80"/><circle cx="12" cy="12" r="9.800" fill="#f4f4f4"/><path d="M12 19.500V12L7 6.500M12 12L16.500 7" fill="none" stroke="#222" stroke-width="1.800"/><circle cx="12" cy="12" r="1.800" fill="#222"/></svg></div>
    <div class="w-11 grid place-items-center relative"><svg class="w-6 h-6"><use href="#chrome"/></svg><b class="absolute right-[5px] top-[6px] w-[15px] h-[15px] rounded-full bg-[#f4511e] text-white text-[9px] leading-[15px] text-center font-semibold">W</b><i class="absolute bottom-[3px] w-[6px] h-[3px] rounded-full bg-[#9aa3a8]"></i></div>
    <div class="w-11 grid place-items-center relative"><svg class="w-6 h-6" viewBox="0 0 24 24"><rect x="7.500" y="1.500" width="15" height="15" rx="2" fill="none" stroke="#0091da" stroke-width="3.200"/><rect x="1.500" y="7.500" width="15" height="15" rx="2" fill="none" stroke="#f38b00" stroke-width="3.200"/><path d="M7.500 10V14.500Q7.500 16.500 9.500 16.500H13" fill="none" stroke="#0091da" stroke-width="3.200"/></svg><i class="absolute bottom-[3px] w-[6px] h-[3px] rounded-full bg-[#9aa3a8]"></i></div>
    <div class="w-11 grid place-items-center relative"><div class="absolute left-[2px] top-[3px] w-10 h-10 rounded-md bg-white/8 border border-white/5"></div><svg class="w-[22px] h-[22px] relative" viewBox="0 0 22 22"><defs><linearGradient id="ph" x1="0" y1="0" x2="1" y2="0"><stop stop-color="#1d7bd0"/><stop offset="1" stop-color="#6a54b4"/></linearGradient></defs><rect width="22" height="22" rx="2" fill="url(#ph)"/><path d="M9 10Q11 7 13.500 10L22 19V22H0V20Z" fill="#1273c9"/><path d="M0 18L9 9.500Q11 7.500 13 9.500L15 11.500L5 22H1Z" fill="#38cdf3"/><circle cx="16" cy="4" r="2" fill="#fff"/></svg><i class="absolute bottom-[3px] w-4 h-[3px] rounded-full bg-[#4cc2ff]"></i></div>
  </div>
  <div class="ml-auto mr-[18px] text-right leading-4 tracking-[-0.2px]"><div>8:52 PM</div><div>7/23/2025</div></div>
</footer>
</body>
</html>
